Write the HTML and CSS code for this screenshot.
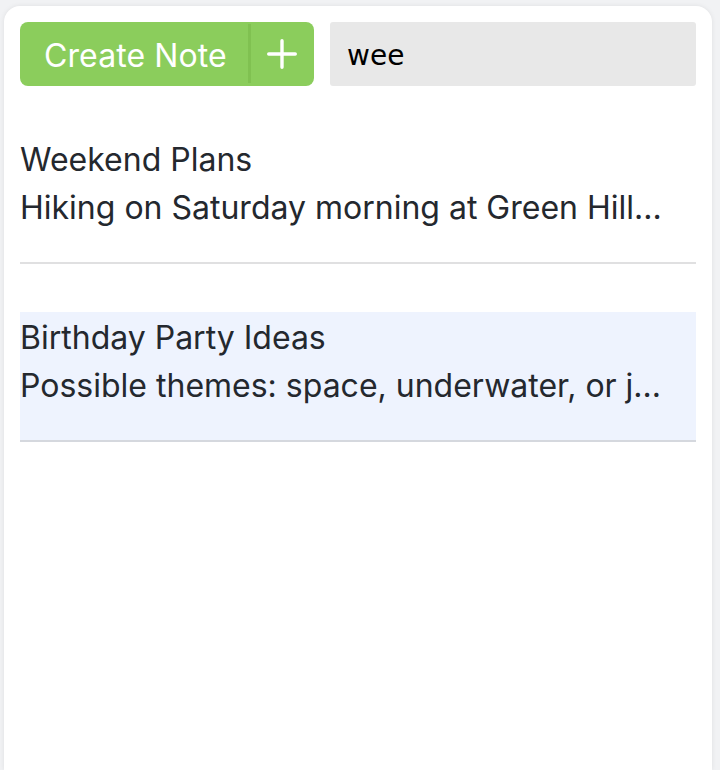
FILE: index.html
```html
<!DOCTYPE html>
<html>
<head>
<meta charset="utf-8">
<link rel="stylesheet" href="styles.css">
</head>
<body>
<div class="card">
  <div class="toolbar">
    <div class="create-btn">
      <span class="create-label">Create Note</span>
      <span class="create-sep"></span>
      <span class="create-plus">
        <svg width="30" height="30" viewBox="0 0 30 30"><path d="M15 1.7V28.3M1.7 15H28.3" stroke="#fff" stroke-width="3.4" stroke-linecap="round" fill="none"/></svg>
      </span>
    </div>
    <div class="search">wee</div>
  </div>
  <ul class="notes">
    <li class="note">
      <div class="note-title">Weekend Plans</div>
      <div class="note-body">Hiking on Saturday morning at Green Hill...</div>
    </li>
    <li class="note selected">
      <div class="note-title">Birthday Party Ideas</div>
      <div class="note-body">Possible themes: space, underwater, or j...</div>
    </li>
  </ul>
</div>
</body>
</html>
```
FILE: styles.css
```css
html, body { margin: 0; padding: 0; }
body {
  background: #f1f2f4;
  padding: 6px 8px 0 4px;
  height: 770px;
  box-sizing: border-box;
  overflow: hidden;
  font-family: Inter, "Noto Sans", sans-serif;
}
.card {
  background: #fff;
  border-radius: 16px 16px 0 0;
  box-shadow: 0 0 5px rgba(0, 0, 0, 0.08);
  padding: 16px;
  height: 764px;
  box-sizing: border-box;
}
.toolbar {
  display: flex;
  gap: 16px;
  height: 64px;
}
.create-btn {
  display: flex;
  align-items: stretch;
  width: 294px;
  background: #8bcd5c;
  border-radius: 8px;
  color: #fff;
}
.create-label {
  display: flex;
  align-items: center;
  width: 228px;
  padding: 2px 0 0 24px;
  box-sizing: border-box;
  font-size: 32px;
  letter-spacing: 0.1px;
}
.create-sep {
  width: 3px;
  margin: 2px 0 3px;
  background: #80c151;
}
.create-plus {
  flex: 1;
  display: flex;
  align-items: center;
  justify-content: center;
  padding-right: 1px;
}
.search {
  flex: 1;
  background: #e8e8e8;
  border-radius: 3px;
  display: flex;
  align-items: center;
  padding: 3px 0 0 17px;
  font-family: "DejaVu Sans", sans-serif;
  font-size: 28px;
  color: #000;
}
.notes {
  list-style: none;
  margin: 48px 0 0;
  padding: 0;
  display: flex;
  flex-direction: column;
  gap: 48px;
}
.note {
  padding: 2px 0 30px;
  border-bottom: 2px solid #e0e0e1;
  font-size: 32px;
  line-height: 48px;
  color: #24282e;
  white-space: nowrap;
}
.note.selected {
  background: #eef3fe;
  border-bottom-color: #d5d8de;
}
```
